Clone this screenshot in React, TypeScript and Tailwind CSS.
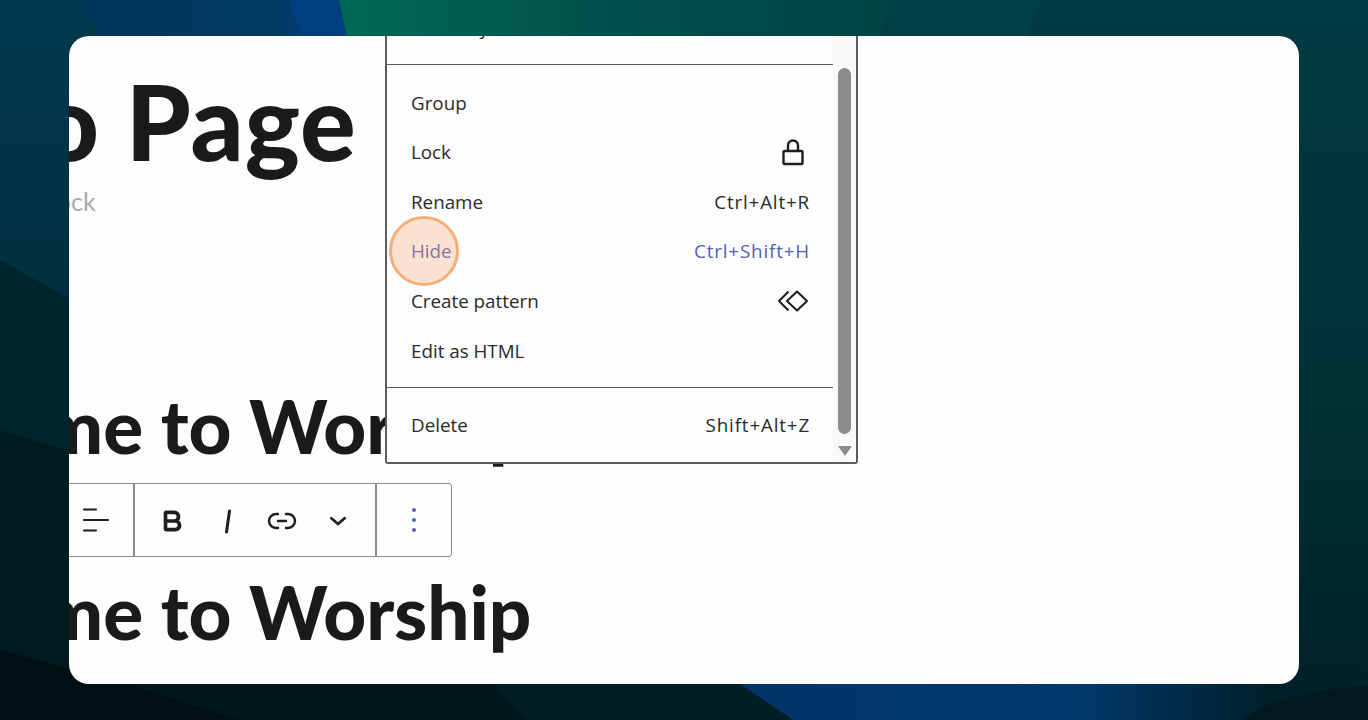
import { Bold } from 'lucide-react';

const menuFont = '[font-family:"Open_Sans","Noto_Sans",sans-serif]';

function LockIcon() {
  return (
    <svg className="mr-[4px]" width="24" height="28" viewBox="0 0 24 28" fill="none" stroke="#1e1e1e" strokeWidth="2.4" strokeLinejoin="round">
      <path d="M7 13V7.5a5 5 0 0 1 10 0V13" />
      <rect x="2.5" y="13" width="19" height="13" rx="1" />
    </svg>
  );
}

function PatternIcon() {
  return (
    <svg width="32" height="24" viewBox="0 0 32 24" fill="none" stroke="#1e1e1e" strokeWidth="2" strokeLinejoin="round">
      <path d="M20 2.5 30 12 20 21.5 10 12Z" />
      <path d="M11.5 2.5 2 12l9.5 9.5" />
    </svg>
  );
}

function MenuRow({ label, shortcut, icon, active }: { label: string; shortcut?: string; icon?: React.ReactNode; active?: boolean }) {
  return (
    <div className={`flex h-[49.6px] items-center justify-between pl-[24px] pr-[24px] text-[18.8px] ${active ? 'text-[#5161b8]' : 'text-[#2a2a2a]'}`}>
      <span>{label}</span>
      {shortcut && <span className="-mr-[1px] tracking-[0.85px]">{shortcut}</span>}
      {icon}
    </div>
  );
}

function ContextMenu() {
  return (
    <div className={`absolute bottom-[220px] left-[316px] flex w-[473px] rounded-[3px] border-2 border-[#5c5c5c] bg-[#fdfdfd] ${menuFont}`}>
      <div className="w-[447px]">
        <MenuRow label="Paste styles" />
        <div className="mt-[11px] h-px bg-[#5c5c5c]" />
        <div className="pt-[13px]">
          <MenuRow label="Group" />
          <MenuRow label="Lock" icon={<LockIcon />} />
          <MenuRow label="Rename" shortcut="Ctrl+Alt+R" />
          <MenuRow label="Hide" shortcut="Ctrl+Shift+H" active />
          <MenuRow label="Create pattern" icon={<PatternIcon />} />
          <MenuRow label="Edit as HTML" />
        </div>
        <div className="mt-[12px] h-px bg-[#5c5c5c]" />
        <div className="pb-[12px] pt-[12px]">
          <MenuRow label="Delete" shortcut="Shift+Alt+Z" />
        </div>
      </div>
      <div className="relative flex w-[23px] flex-col items-center bg-[#f9f9f9]">
        <div className="mt-[65px] h-[366px] w-[13px] rounded-full bg-[#8c8c8c]" />
        <svg className="mt-[12px]" width="14" height="10" viewBox="0 0 14 10">
          <path d="M0 0h14L7 10Z" fill="#8c8c8c" />
        </svg>
      </div>
    </div>
  );
}

function BlockToolbar() {
  return (
    <div className="-ml-px flex h-[74px] w-[385px] rounded-r-[3px] border border-[#8a8a8a] bg-[#fdfdfd] text-[#1e1e1e]">
      <div className="flex w-[67px] items-center justify-center border-r-2 border-[#8a8a8a] pr-[9px]">
        <svg width="28" height="26" viewBox="0 0 28 26" fill="none" stroke="#1e1e1e" strokeWidth="2.2" strokeLinecap="round">
          <path d="M2 2.5h12M2 13h24M2 23.5h12" />
        </svg>
      </div>
      <div className="flex w-[242px] items-center gap-[30px] border-r-2 border-[#8a8a8a] pl-[24px] pt-[2px]">
        <Bold size={26} strokeWidth={3.4} />
        <svg width="26" height="26" viewBox="0 0 26 26" fill="none" stroke="#1e1e1e" strokeWidth="3" strokeLinecap="round">
          <path d="M14.5 3 11.5 24" />
        </svg>
        <svg className="-ml-[4px]" width="30" height="20" viewBox="0 0 30 20" fill="none" stroke="#1e1e1e" strokeWidth="2.4" strokeLinecap="round">
          <path d="M11 3H9a7 7 0 0 0 0 14h2M19 3h2a7 7 0 0 1 0 14h-2M11 10h8" />
        </svg>
        <svg className="ml-[1px]" width="20" height="12" viewBox="0 0 20 12" fill="none" stroke="#1e1e1e" strokeWidth="2.6">
          <path d="M2.5 2.5 10 9l7.5-6.5" />
        </svg>
      </div>
      <div className="flex flex-1 flex-col items-center justify-center gap-[6px]">
        <span className="h-[4px] w-[4px] rounded-full bg-[#4c5fc0]" />
        <span className="h-[4px] w-[4px] rounded-full bg-[#4c5fc0]" />
        <span className="h-[4px] w-[4px] rounded-full bg-[#4c5fc0]" />
      </div>
    </div>
  );
}

export default function App() {
  return (
    <div className="relative h-[720px] w-[1368px] overflow-hidden bg-[#00222b] px-[69px] py-[36px]">
      {/* wallpaper */}
      <svg className="absolute inset-0" width="1368" height="720" viewBox="0 0 1368 720">
        <defs>
          <linearGradient id="base" x1="0" y1="0" x2="0" y2="1">
            <stop offset="0" stopColor="#003a42" />
            <stop offset="0.45" stopColor="#00343a" />
            <stop offset="0.7" stopColor="#002c32" />
            <stop offset="0.9" stopColor="#00232a" />
            <stop offset="1" stopColor="#001f26" />
          </linearGradient>
          <linearGradient id="left" x1="0" y1="0" x2="0" y2="1">
            <stop offset="0" stopColor="#003a4e" />
            <stop offset="1" stopColor="#002f3e" />
          </linearGradient>
          <linearGradient id="green" x1="0" y1="0" x2="1" y2="0">
            <stop offset="0" stopColor="#006a55" />
            <stop offset="0.5" stopColor="#004f4c" />
            <stop offset="1" stopColor="#004446" />
          </linearGradient>
          <linearGradient id="blueTop" x1="0" y1="0" x2="1" y2="0">
            <stop offset="0" stopColor="#00355a" />
            <stop offset="0.75" stopColor="#003a62" />
            <stop offset="1" stopColor="#003f80" />
          </linearGradient>
          <linearGradient id="blueBottom" x1="0" y1="0" x2="1" y2="0">
            <stop offset="0" stopColor="#003566" />
            <stop offset="0.55" stopColor="#00396b" />
            <stop offset="0.85" stopColor="#001f2a" />
            <stop offset="1" stopColor="#00222a" />
          </linearGradient>
        </defs>
        <rect width="1368" height="720" fill="url(#base)" />
        <rect width="90" height="320" fill="url(#left)" />
        <path d="M0 260 90 310V470L0 430Z" fill="#00242c" />
        <path d="M0 430 90 458V680L0 650Z" fill="#001b20" />
        <path d="M90 670H480L530 720H240Z" fill="#00181c" />
        <path d="M0 650 130 684 240 720H0Z" fill="#000f14" />
        <path d="M880 0H1040L1020 60H860Z" fill="#003f45" />
        <path d="M80 0H288L340 60H110Z" fill="url(#blueTop)" />
        <path d="M288 0H340L355 60H312Z" fill="#003f80" />
        <path d="M339 0H890L875 60H352Z" fill="url(#green)" />
        <path d="M480 670H720L793 720H530Z" fill="#001e24" />
        <path d="M720 670H1368V720H793Z" fill="url(#blueBottom)" />
        <path d="M1240 720C1280 695 1320 690 1368 685V720Z" fill="#001a20" />
      </svg>

      {/* page card */}
      <div className="relative h-[648px] w-[1230px] overflow-hidden rounded-[20px] bg-[#fdfdfd]">
        <div className="-ml-[1px] flex flex-col font-['Lato',sans-serif] text-[#1a1a1a]">
          <div className="-ml-[254px] mt-[27px] whitespace-nowrap text-[104px] font-black leading-[116px] tracking-[1px]">Demo Page</div>
          <div className="-ml-[33px] mt-[7px] whitespace-nowrap text-[25px] leading-[30px] text-[#aaaaaa]">Block</div>
          <div className="-ml-[239px] mt-[166px] whitespace-nowrap text-[74.5px] font-black leading-[86px]">Welcome to Worship</div>
          <div className="mt-[15px]">
            <BlockToolbar />
          </div>
          <div className="-ml-[239px] mt-[11px] whitespace-nowrap text-[74.5px] font-black leading-[86px]">Welcome to Worship</div>
        </div>
        <ContextMenu />
        {/* click marker */}
        <div className="absolute left-[320px] top-[180px] h-[70px] w-[70px] rounded-full border-[3px] border-[#f5ae78] bg-[#f8a56a]/30" />
      </div>
    </div>
  );
}
